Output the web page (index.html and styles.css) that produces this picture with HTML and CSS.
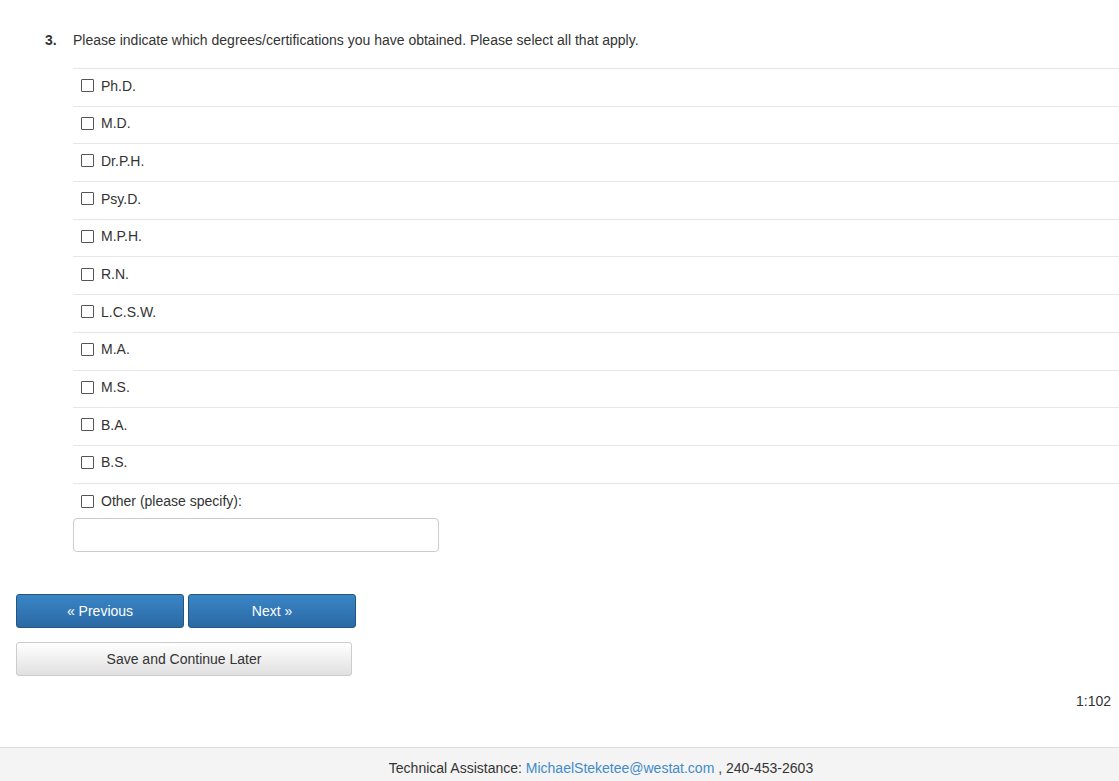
FILE: index.html
```html
<!DOCTYPE html>
<html>
<head>
<meta charset="utf-8">
<link rel="stylesheet" href="styles.css">
</head>
<body>
<div class="page">
  <div class="question">
    <div class="q-head">
      <span class="q-num">3.</span>
      <span class="q-text">Please indicate which degrees/certifications you have obtained. Please select all that apply.</span>
    </div>
    <div class="options">
      <label class="opt"><span class="box"></span><span>Ph.D.</span></label>
      <label class="opt"><span class="box"></span><span>M.D.</span></label>
      <label class="opt"><span class="box"></span><span>Dr.P.H.</span></label>
      <label class="opt"><span class="box"></span><span>Psy.D.</span></label>
      <label class="opt"><span class="box"></span><span>M.P.H.</span></label>
      <label class="opt"><span class="box"></span><span>R.N.</span></label>
      <label class="opt"><span class="box"></span><span>L.C.S.W.</span></label>
      <label class="opt"><span class="box"></span><span>M.A.</span></label>
      <label class="opt"><span class="box"></span><span>M.S.</span></label>
      <label class="opt"><span class="box"></span><span>B.A.</span></label>
      <label class="opt"><span class="box"></span><span>B.S.</span></label>
      <label class="opt opt-other"><span class="box"></span><span>Other (please specify):</span></label>
      <div class="specify"></div>
    </div>
  </div>
  <div class="nav">
    <div class="nav-row">
      <div class="btn btn-primary">« Previous</div>
      <div class="btn btn-primary">Next »</div>
    </div>
    <div class="btn btn-default btn-save">Save and Continue Later</div>
  </div>
  <div class="page-id">1:102</div>
</div>
<div class="footer">Technical Assistance: <span class="link">MichaelSteketee@westat.com</span> , 240-453-2603</div>
</body>
</html>
```
FILE: styles.css
```css
html, body {
  margin: 0;
  padding: 0;
}
body {
  font-family: "Liberation Sans", Arial, sans-serif;
  font-size: 14px;
  line-height: 20px;
  color: #333;
  background: #fff;
  width: 1119px;
  height: 781px;
  overflow: hidden;
  display: flex;
  flex-direction: column;
}
.page {
  flex: 1;
  display: flex;
  flex-direction: column;
}
.question {
  padding-top: 30px;
}
.q-head {
  display: flex;
  padding-left: 45px;
}
.q-num {
  font-weight: bold;
  width: 28px;
}
.options {
  margin-left: 73px;
  margin-top: 18px;
}
.opt {
  display: flex;
  align-items: center;
  box-sizing: border-box;
  height: 37.7px;
  border-top: 1px solid #e6e6e6;
  padding-left: 8px;
  padding-bottom: 3.5px;
}
.opt-other {
  height: 34px;
  padding-top: 2px;
  padding-bottom: 0;
}
.box {
  width: 11px;
  height: 11px;
  border: 1px solid #555;
  border-radius: 1px;
  margin-right: 7px;
  background: #fff;
}
.specify {
  width: 364px;
  height: 32px;
  border: 1px solid #ccc;
  border-radius: 4px;
  margin-top: 1px;
}
.nav {
  margin-top: 42px;
  padding-left: 16px;
  display: flex;
  flex-direction: column;
  gap: 14px;
}
.nav-row {
  display: flex;
  gap: 4px;
}
.btn {
  height: 32px;
  display: flex;
  align-items: center;
  justify-content: center;
  border-radius: 3px;
  box-sizing: content-box;
}
.btn-primary {
  width: 166px;
  color: #fff;
  border: 1px solid #245580;
  background: linear-gradient(to bottom, #3a85c6 0%, #2a69a4 100%);
}
.btn-default {
  color: #333;
  border: 1px solid #ccc;
  background: linear-gradient(to bottom, #fff 0%, #e0e0e0 100%);
}
.btn-save {
  width: 334px;
}
.page-id {
  text-align: right;
  padding-right: 8px;
  margin-top: 15px;
}
.footer {
  border-top: 1px solid #ddd;
  background: #f4f4f4;
  text-align: center;
  line-height: 20px;
  padding-top: 10px;
  box-sizing: border-box;
  height: 34px;
  padding-left: 83px;
}
.link {
  color: #428bca;
}
```
